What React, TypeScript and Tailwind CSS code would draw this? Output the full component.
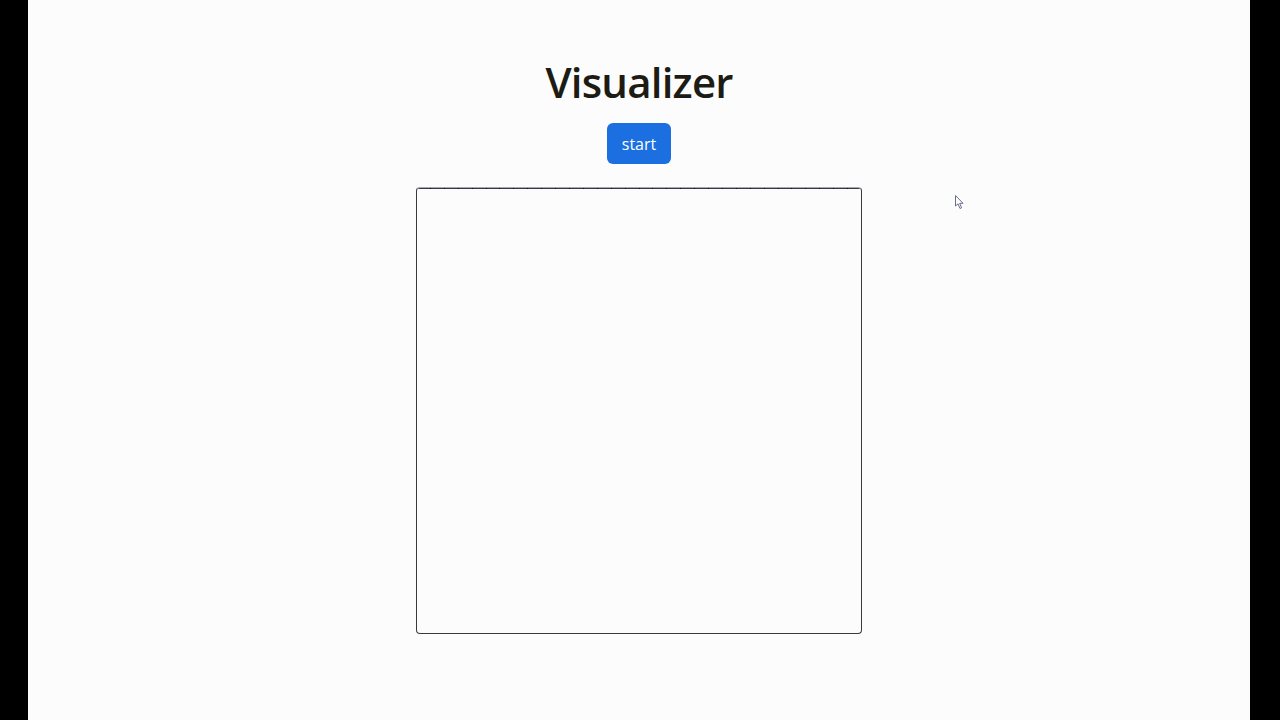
const bars = Array.from({ length: 32 }, (_, i) => i);

const Visualizer = () => {
  return (
    <div className="flex min-h-screen w-full bg-black">
      <main
        className="relative ml-[28px] mr-[30px] flex flex-1 flex-col items-center bg-[#fcfcfd] pt-[55px]"
        style={{ fontFamily: '"Open Sans", "Noto Sans", sans-serif' }}
      >
        <h1 className="text-[42px] font-semibold leading-[54px] tracking-[-0.8px] text-[#1c1c14]">
          Visualizer
        </h1>
        <button className="mt-[14px] h-[41px] w-[64px] rounded-[6px] bg-[#1c6fe0] text-[16px] text-white">
          start
        </button>
        <div className="mt-[23px] flex h-[447px] w-[446px] flex-col overflow-hidden rounded-[4px] border border-[#3a3a3a] border-t-[#a4a8b8]">
          <div className="flex h-[1px] w-full bg-[#3a3a3a]">
            {bars.map((i) => (
              <div
                key={i}
                className="h-full flex-1 border-r border-[#0e0e0e] last:border-r-0"
              />
            ))}
          </div>
        </div>

        {/* mouse pointer caught in the capture */}
        <svg
          className="absolute left-[927px] top-[195px]"
          width="10"
          height="15"
          viewBox="0 0 10 15"
        >
          <path
            d="M0.5 0.5 L0.5 11 L3 8.8 L5 13.5 L6.6 12.8 L4.7 8.3 L8 8.3 Z"
            fill="#fff"
            stroke="#6b6f86"
            strokeWidth="1"
          />
        </svg>
      </main>
    </div>
  );
};

export default function App() {
  return <Visualizer />;
}
